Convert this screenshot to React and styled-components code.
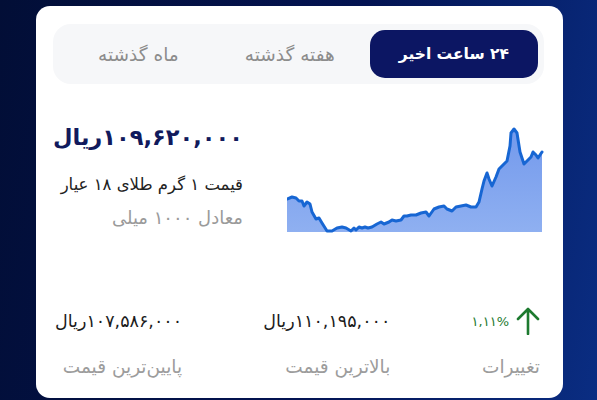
import React from "react";
import styled, {createGlobalStyle} from "styled-components";

const GlobalStyle = createGlobalStyle`
    html, body {
        margin: 0;
        padding: 0;
    }
    body {
        min-height: 400px;
        background: linear-gradient(100deg, #020e36 0%, #031352 55%, #0a2d82 100%);
        font-family: "DejaVu Sans", sans-serif;
    }
`;

const points = [
    [0, 75], [5, 73], [9, 74], [12, 77], [15, 77], [17, 82], [20, 78], [23, 80], [25, 88], [29, 95],
    [32, 94], [35, 99], [40, 107], [45, 107], [50, 104], [55, 103], [59, 104], [64, 107], [67, 104],
    [69, 106], [72, 103], [75, 104], [78, 103], [81, 104], [85, 103], [90, 100], [94, 98], [97, 100],
    [102, 98], [105, 96], [109, 97], [114, 96], [117, 92], [120, 92], [124, 91], [129, 91], [134, 89],
    [139, 88], [142, 92], [147, 85], [152, 83], [157, 82], [160, 85], [165, 87], [169, 83], [174, 82],
    [179, 81], [184, 83], [189, 83], [192, 78], [195, 65], [197, 57], [200, 49], [202, 55], [205, 62],
    [209, 53], [212, 45], [215, 42], [220, 37], [223, 22], [224, 9], [227, 5], [230, 9], [233, 28],
    [237, 40], [240, 37], [244, 33], [246, 28], [249, 31], [251, 34], [255, 28]
];

const tabs = ["۲۴ ساعت اخیر", "هفته گذشته", "ماه گذشته"];

function PriceChart() {
    const line = points.map((p, i) => (i === 0 ? "M" : "L") + p[0] + "," + p[1]).join(" ");
    const area = "M0,108 " + points.map(p => "L" + p[0] + "," + p[1]).join(" ") + " L255,108 Z";

    return (
        <ChartBox width="257" height="110" viewBox="0 0 257 110">
            <defs>
                <linearGradient id="areaFill" x1="0" y1="0" x2="0" y2="1">
                    <stop offset="0%" stopColor="#7399ec"/>
                    <stop offset="100%" stopColor="#8fb0f1"/>
                </linearGradient>
            </defs>
            <path d={area} fill="url(#areaFill)"/>
            <path d={line} fill="none" stroke="#1766d3" strokeWidth="3" strokeLinejoin="round" strokeLinecap="round"/>
        </ChartBox>
    );
}

function App() {
    return (
        <Page>
            <GlobalStyle/>
            <Card>
                <TabBar>
                    {tabs.map((t, i) => (
                        <Tab key={t} active={i === 0}>{t}</Tab>
                    ))}
                </TabBar>

                <MainRow>
                    <PriceChart/>
                    <Info>
                        <Price>۱۰۹,۶۲۰,۰۰۰ریال</Price>
                        <Caption>قیمت ۱ گرم طلای ۱۸ عیار</Caption>
                        <Caption muted>معادل ۱۰۰۰ میلی</Caption>
                    </Info>
                </MainRow>

                <Stats>
                    <Stat>
                        <ChangeRow>
                            <svg width="24" height="28" viewBox="0 0 24 28">
                                <path d="M2,12 L12,2 L22,12 M12,2 L12,27" fill="none" stroke="#1d7a2f" strokeWidth="2.6" strokeLinecap="round" strokeLinejoin="round"/>
                            </svg>
                            <Percent>۱,۱۱%</Percent>
                        </ChangeRow>
                        <StatLabel>تغییرات</StatLabel>
                    </Stat>
                    <Stat>
                        <StatValue>۱۱۰,۱۹۵,۰۰۰ریال</StatValue>
                        <StatLabel>بالاترین قیمت</StatLabel>
                    </Stat>
                    <Stat>
                        <StatValue>۱۰۷,۵۸۶,۰۰۰ریال</StatValue>
                        <StatLabel>پایین‌ترین قیمت</StatLabel>
                    </Stat>
                </Stats>
            </Card>
        </Page>
    );
}

export default App;

const Page = styled.div`
    padding: 6px 34px 0 36px;
`;

const Card = styled.div`
    direction: rtl;
    box-sizing: border-box;
    width: 527px;
    height: 392px;
    background: #ffffff;
    border-radius: 14px;
    padding: 18px 19px 0 17px;
`;

const TabBar = styled.div`
    display: flex;
    gap: 4px;
    height: 60px;
    box-sizing: border-box;
    padding: 6px;
    background: #f6f7f9;
    border-radius: 18px;
`;

const Tab = styled.div`
    display: flex;
    align-items: center;
    justify-content: center;
    padding: 0 ${p => (p.active ? "29px" : "31px")};
    border-radius: 15px;
    font-size: ${p => (p.active ? "15.5px" : "18.5px")};
    font-weight: ${p => (p.active ? "bold" : "normal")};
    color: ${p => (p.active ? "#ffffff" : "#8c8c8c")};
    background: ${p => (p.active ? "#0c1663" : "transparent")};
`;

const MainRow = styled.div`
    display: flex;
    align-items: flex-start;
    gap: 44px;
    margin-top: 40px;
`;

const ChartBox = styled.svg`
    display: block;
    flex-shrink: 0;
`;

const Info = styled.div`
    flex: 1;
    display: flex;
    flex-direction: column;
`;

const Price = styled.div`
    font-size: 22.5px;
    font-weight: bold;
    line-height: 30px;
    color: #111a5c;
    margin-top: -2px;
    white-space: nowrap;
`;

const Caption = styled.div`
    font-size: ${p => (p.muted ? "18px" : "16.5px")};
    line-height: 24px;
    color: ${p => (p.muted ? "#9a9a9a" : "#222222")};
    margin-top: ${p => (p.muted ? "9px" : "21px")};
    white-space: nowrap;
`;

const Stats = styled.div`
    display: flex;
    justify-content: space-between;
    margin: 76px 4px 0 2px;
`;

const Stat = styled.div`
    display: flex;
    flex-direction: column;
    align-items: flex-start;
    gap: 23px;
`;

const StatValue = styled.div`
    font-size: 17.5px;
    line-height: 22px;
    color: #1c1c1c;
    white-space: nowrap;
`;

const ChangeRow = styled.div`
    display: flex;
    align-items: center;
    gap: 7px;
    height: 22px;
`;

const Percent = styled.div`
    font-size: 13px;
    color: #1d7a2f;
`;

const StatLabel = styled.div`
    font-size: 18.5px;
    line-height: 24px;
    color: #9c9c9c;
    white-space: nowrap;
`;
